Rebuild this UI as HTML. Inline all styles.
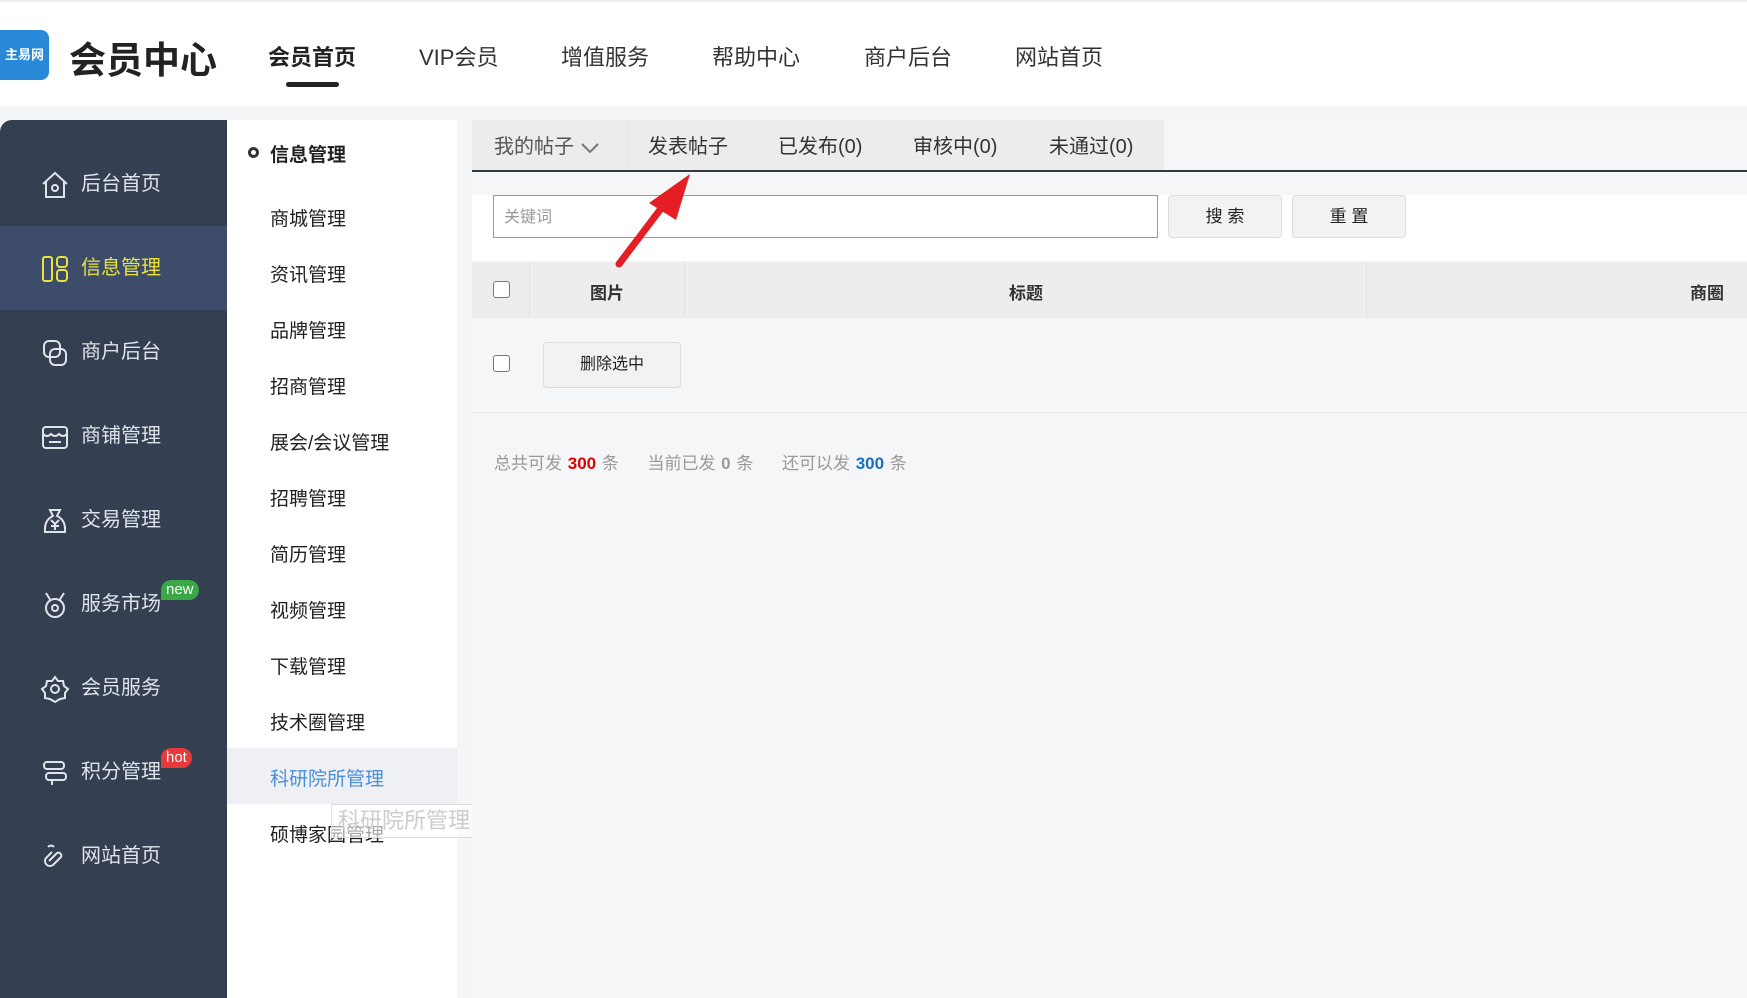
<!DOCTYPE html>
<html><head><meta charset="utf-8"><style>
*{margin:0;padding:0;box-sizing:border-box}
body{width:1747px;height:998px;overflow:hidden;background:#f4f5f7;font-family:"Liberation Sans","Noto Sans CJK SC",sans-serif;position:relative;color:#333}
.hdr{position:absolute;left:0;top:0;width:1747px;height:106px;background:#fff;border-top:2px solid #eee}
.logo{position:absolute;left:0;top:28px;width:49px;height:50px;background:#2a88d8;border-radius:0 8px 8px 0;color:#fff;font-size:13px;font-weight:bold;line-height:50px;text-align:center}
.title{position:absolute;left:69px;top:28px;font-size:37px;font-weight:bold;color:#222}
.nav{position:absolute;top:38px;font-size:22px;color:#333}
.nav.on{font-weight:bold;color:#222}
.uline{position:absolute;left:286px;top:80px;width:53px;height:5px;border-radius:3px;background:#222}
.side{position:absolute;left:0;top:120px;width:227px;height:878px;background:#353f52;border-radius:12px 0 0 0}
.si{position:absolute;left:0;width:227px;height:84px;color:#dfe3ea;font-size:20px;line-height:84px;padding-left:81px}
.si.on{background:#3e4c6b;color:#e8e33a}
.si svg{position:absolute;left:40px;top:28px}
.badge{position:absolute;top:18px;color:#fff;font-size:15px;line-height:20px;padding:0 5px;border-radius:10px 10px 10px 0}
.sub{position:absolute;left:227px;top:120px;width:230px;height:878px;background:#fff}
.sub div{position:absolute;left:43px;font-size:19px;color:#222}
.content{position:absolute;left:472px;top:120px;width:1275px;height:878px;background:#f5f6f8}
.tabs{position:absolute;left:0;top:0;width:692px;height:50px;background:#ececec}
.tab{position:absolute;top:10px;font-size:20px;color:#333}
.tline{position:absolute;left:0;top:50px;width:1275px;height:2px;background:#333a45}
.srow{position:absolute;left:0;top:75px;width:1275px;height:66px;background:#fff}
.inp{position:absolute;left:21px;top:0;width:665px;height:43px;border:1px solid #999;background:#fff;font-size:16px;color:#999;line-height:43px;padding-left:10px}
.btn{position:absolute;top:0;height:43px;border:1px solid #ddd;border-radius:4px;background:#f2f2f2;font-size:17px;text-align:center;line-height:41px;color:#222}
.th{position:absolute;left:0;top:142px;width:1275px;height:56px;background:#ededed;font-size:17px;font-weight:bold;color:#333}
.th span{position:absolute;top:17px}
.cb{position:absolute;width:17px;height:17px;border:1px solid #777;border-radius:3px;background:#fff}
.row{position:absolute;left:0;top:198px;width:1275px;height:95px;border-bottom:1px solid #e3e3e3}
.stat{position:absolute;left:22px;top:329px;font-size:17px;color:#999;word-spacing:1px}
</style></head><body>
<div class="hdr">
<div class="logo">主易网</div>
<div class="title">会员中心</div>
<div class="nav on" style="left:268px">会员首页</div>
<div class="uline"></div>
<div class="nav" style="left:419px">VIP会员</div>
<div class="nav" style="left:561px">增值服务</div>
<div class="nav" style="left:712px">帮助中心</div>
<div class="nav" style="left:864px">商户后台</div>
<div class="nav" style="left:1015px">网站首页</div>
</div>
<div class="side">
<div class="si" style="top:22px"><svg width="30" height="30" viewBox="0 0 30 30" fill="none" stroke="#dfe3ea" stroke-width="2"><path d="M3 14L15 3l12 11M6 12v15h18V12"/><circle cx="15" cy="18" r="3"/></svg>后台首页</div>
<div class="si on" style="top:106px"><svg width="30" height="30" viewBox="0 0 30 30" fill="none" stroke="#e8e33a" stroke-width="2"><rect x="3" y="3" width="9" height="24" rx="2"/><rect x="17" y="3" width="10" height="10" rx="3"/><rect x="17" y="16" width="10" height="11" rx="3"/></svg>信息管理</div>
<div class="si" style="top:190px"><svg width="30" height="30" viewBox="0 0 30 30" fill="none" stroke="#dfe3ea" stroke-width="2"><rect x="4" y="3" width="16" height="16" rx="5"/><rect x="10" y="11" width="16" height="16" rx="5"/></svg>商户后台</div>
<div class="si" style="top:274px"><svg width="30" height="30" viewBox="0 0 30 30" fill="none" stroke="#dfe3ea" stroke-width="2"><rect x="3" y="5" width="24" height="21" rx="3"/><path d="M3 12q4 4 8 0q4 4 8 0q4 4 8 0M9 20h12"/></svg>商铺管理</div>
<div class="si" style="top:358px"><svg width="30" height="30" viewBox="0 0 30 30" fill="none" stroke="#dfe3ea" stroke-width="2"><path d="M10 4h10l-3 6q9 4 8 16H5q-1-12 8-16z"/><path d="M11 14l4 4 4-4M15 18v6M11 20h8"/></svg>交易管理</div>
<div class="si" style="top:442px"><svg width="30" height="30" viewBox="0 0 30 30" fill="none" stroke="#dfe3ea" stroke-width="2"><path d="M6 3l5 8M24 3l-5 8"/><circle cx="15" cy="18" r="9"/><circle cx="15" cy="18" r="3"/></svg>服务市场<span class="badge" style="left:161px;background:#3aa845">new</span></div>
<div class="si" style="top:526px"><svg width="30" height="30" viewBox="0 0 30 30" fill="none" stroke="#dfe3ea" stroke-width="2"><path d="M15 3l3 4 5 0 1 5 4 3-3 4 0 5-5 1-5 3-5-3-5-1 0-5-3-4 4-3 1-5 5 0z"/><circle cx="15" cy="15" r="4"/></svg>会员服务</div>
<div class="si" style="top:610px"><svg width="30" height="30" viewBox="0 0 30 30" fill="none" stroke="#dfe3ea" stroke-width="2"><rect x="4" y="4" width="20" height="7" rx="3"/><rect x="6" y="15" width="20" height="7" rx="3"/><path d="M12 22v5"/></svg>积分管理<span class="badge" style="left:161px;background:#e83a3a">hot</span></div>
<div class="si" style="top:694px"><svg width="30" height="30" viewBox="0 0 30 30" fill="none" stroke="#dfe3ea" stroke-width="2"><path d="M12 10l-6 6a5 5 0 007 7l8-8a3 3 0 00-4-4l-8 8"/><path d="M8 5a4 4 0 016 0"/></svg>网站首页</div>
</div>
<div class="sub">
<span style="position:absolute;left:21px;top:27px;width:11px;height:11px;border:3px solid #333;border-radius:50%"></span>
<div style="top:20px;font-weight:bold">信息管理</div>
<div style="top:84px">商城管理</div>
<div style="top:140px">资讯管理</div>
<div style="top:196px">品牌管理</div>
<div style="top:252px">招商管理</div>
<div style="top:308px">展会/会议管理</div>
<div style="top:364px">招聘管理</div>
<div style="top:420px">简历管理</div>
<div style="top:476px">视频管理</div>
<div style="top:532px">下载管理</div>
<div style="top:588px">技术圈管理</div>
<div style="top:628px;left:0;width:230px;height:56px;background:#eef0f3"></div>
<div style="top:644px;color:#4a8fd8">科研院所管理</div>
<div style="top:700px">硕博家园管理</div>
<div style="top:684px;left:104px;width:157px;height:34px;border:1px solid #ddd;background:rgba(255,255,255,.6);color:#ccc;font-size:22px;line-height:32px;padding-left:6px;width:158px">科研院所管理</div>
</div>
<div class="content">
<div class="tabs">
<div class="tab" style="left:22px;color:#555">我的帖子 <svg width="20" height="14" viewBox="0 0 20 14" style="vertical-align:middle"><path d="M2 3l8 8 8-8" fill="none" stroke="#777" stroke-width="2"/></svg></div>
<div style="position:absolute;left:155px;top:0;width:1px;height:50px;background:#e2e2e2"></div>
<div class="tab" style="left:176px">发表帖子</div>
<div class="tab" style="left:306px">已发布(0)</div>
<div class="tab" style="left:441px">审核中(0)</div>
<div class="tab" style="left:577px">未通过(0)</div>
</div>
<div class="tline"></div>
<div class="srow">
<div class="inp">关键词</div>
<div class="btn" style="left:696px;width:114px">搜 索</div>
<div class="btn" style="left:820px;width:114px">重 置</div>
</div>
<div class="th">
<div class="cb" style="left:21px;top:19px"></div>
<div style="position:absolute;left:57px;top:0;width:1px;height:56px;background:#e0e0e0"></div>
<span style="left:118px">图片</span>
<div style="position:absolute;left:212px;top:0;width:1px;height:56px;background:#e0e0e0"></div>
<span style="left:537px">标题</span>
<div style="position:absolute;left:894px;top:0;width:1px;height:56px;background:#e0e0e0"></div>
<span style="left:1218px">商圈</span>
</div>
<div class="row">
<div class="cb" style="left:21px;top:37px"></div>
<div class="btn" style="left:71px;top:24px;width:138px;height:46px;line-height:44px;font-size:16px">删除选中</div>
</div>
<div class="stat">总共可发 <b style="color:#d00">300</b> 条 &nbsp;&nbsp;&nbsp; 当前已发 <b style="color:#999">0</b> 条 &nbsp;&nbsp;&nbsp; 还可以发 <b style="color:#1a6fc0">300</b> 条</div>
</div>
<svg style="position:absolute;left:0;top:0" width="1747" height="998"><path d="M619 264L669 198" stroke="#e51d25" stroke-width="7" stroke-linecap="round"/><path d="M690 174L649 203L676 220Z" fill="#e51d25"/></svg>
</body></html>
